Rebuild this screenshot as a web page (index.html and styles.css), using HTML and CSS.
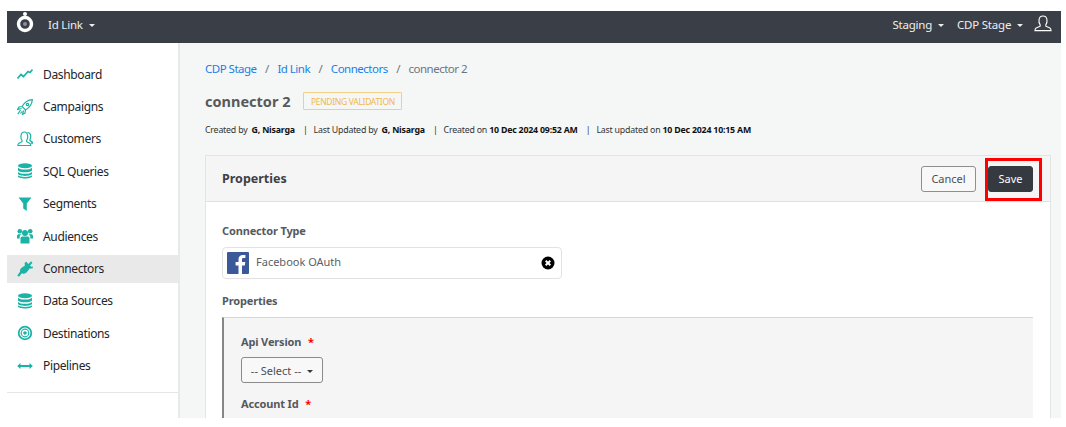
FILE: index.html
```html
<!DOCTYPE html>
<html lang="en">
<head>
    <meta charset="UTF-8">
    <meta name="viewport" content="width=device-width, initial-scale=1.0">
    <title>Id Link - connector 2</title>
    <link rel="stylesheet" href="styles.css">
</head>
<body>
    <div class="app">
        <header class="topbar">
            <svg class="logo" viewBox="0 0 20 22" width="20" height="22">
                <circle cx="10" cy="3" r="2" fill="#fff"/>
                <circle cx="10" cy="13" r="6.500" fill="none" stroke="#fff" stroke-width="3.400"/>
                <circle cx="10" cy="13" r="2" fill="#8a8f96"/>
            </svg>
            <span class="top-link app-name">Id Link <i class="caret"></i></span>
            <div class="top-right">
                <span class="top-link">Staging <i class="caret"></i></span>
                <span class="top-link">CDP Stage <i class="caret"></i></span>
                <svg class="user-icon" viewBox="0 0 18 18" width="18" height="17" fill="none" stroke="#fff" stroke-width="1.200">
                    <path d="M6 10.500C4.600 8.800 4.600 6.500 4.800 5 5.100 2.500 6.800 1 9 1s3.900 1.500 4.200 4c.2 1.500.2 3.800-1.200 5.500v1.300l4.300 2c.8.400 1.200 1 1.200 2.700H.5c0-1.700.4-2.300 1.200-2.700l4.300-2z"/>
                </svg>
            </div>
        </header>
        <div class="main">
            <nav class="sidebar">
                <ul class="nav-list">
                    <li class="nav-item">
                        <svg class="nav-icon" viewBox="0 0 16 16" fill="none" stroke="#1ab3a6" stroke-width="1.700"><path d="M0.500 12.500L4 8.500 6.500 10.500 11 5.500 13 6.500 15.500 3.500"/></svg>
                        Dashboard
                    </li>
                    <li class="nav-item">
                        <svg class="nav-icon" viewBox="0 0 16 16" fill="none" stroke="#1ab3a6" stroke-width="1.200"><path d="M15.300.7C11 1 7.500 3.500 5 7.500L8.500 11C12.500 8.500 15 5 15.300.7zM5 7.500L2 8 .6 10.500 4.500 9.500M8.500 11L8 14 5.500 15.400 6.500 11.500M3.500 11L.8 15.200M5 12.500L3.500 14.500"/><circle cx="10.500" cy="5.500" r="1.200"/></svg>
                        Campaigns
                    </li>
                    <li class="nav-item">
                        <svg class="nav-icon" viewBox="0 0 16 16" fill="none" stroke="#1ab3a6" stroke-width="1.200"><path d="M5 9.500C3.800 8 3.800 6 4 4.700 4.300 2.500 5.500 1 7.300 1s3.100 1.500 3.300 3.700c.2 1.300.1 3.300-1 4.800v1.200l3.100 1.600c.7.400 1 .9 1 2.200H.9c0-1.300.3-1.800 1-2.200L5 10.700zM10.500 1.500c2 0 3 1.500 3.200 3.200.1 1.300 0 2.800-.8 3.900v1l1.800 1c.6.300.8.700.8 1.600h-1.500"/></svg>
                        Customers
                    </li>
                    <li class="nav-item">
                        <svg class="nav-icon" viewBox="0 0 16 16" fill="#1ab3a6"><ellipse cx="8" cy="2.800" rx="7" ry="2.500"/><path d="M1 4.700C2 6 5 6.500 8 6.500s6-.5 7-1.800v2.500C15 8.300 11.500 9.300 8 9.300S1 8.300 1 7.200zM1 8.900c1 1.300 4 1.800 7 1.800s6-.5 7-1.800v1.900c0 1.100-3.500 2.100-7 2.100s-7-1-7-2.100zM1 12.300c1 1.200 4 1.700 7 1.700s6-.5 7-1.700v1.200c0 1.100-3.500 2-7 2s-7-.9-7-2z"/></svg>
                        SQL Queries
                    </li>
                    <li class="nav-item">
                        <svg class="nav-icon" viewBox="0 0 16 16" fill="#1ab3a6"><path d="M1.500 1.500H14.500L9.800 7.500V15L6.200 12.500V7.500z"/></svg>
                        Segments
                    </li>
                    <li class="nav-item">
                        <svg class="nav-icon" viewBox="0 0 16 16" fill="#1ab3a6"><circle cx="8" cy="5" r="3"/><circle cx="2.800" cy="3.300" r="2.300"/><circle cx="13.200" cy="3.300" r="2.300"/><path d="M3.500 15.500V10.500C3.500 9 4.500 8.500 5.500 8.500H10.500C11.500 8.500 12.500 9 12.500 10.500V15.500z"/><path d="M0 10.500V8C0 6.800 .8 6.200 2 6.200H4.500L2.700 8V10.500zM16 10.500V8C16 6.800 15.200 6.200 14 6.200H11.500L13.300 8V10.500z"/></svg>
                        Audiences
                    </li>
                    <li class="nav-item active">
                        <svg class="nav-icon" viewBox="0 0 16 16" fill="#1ab3a6"><path d="M9 .5L11.500 3 14 .3 15.500 1.700 13 4.500 14.300 5.700 16 5.500 15.500 7.500 12.500 7.500 12 8.500 9.500 11.500C8 12.800 6 13 4.800 12.300L2 15.800.3 14.500 3 10.800C2.800 9 3.500 7.500 5 6.500L8 4.500 7.500 2.500z"/></svg>
                        Connectors
                    </li>
                    <li class="nav-item">
                        <svg class="nav-icon" viewBox="0 0 16 16" fill="#1ab3a6"><ellipse cx="8" cy="2.800" rx="7" ry="2.500"/><path d="M1 4.700C2 6 5 6.500 8 6.500s6-.5 7-1.800v2.500C15 8.300 11.500 9.300 8 9.300S1 8.300 1 7.200zM1 8.900c1 1.300 4 1.800 7 1.800s6-.5 7-1.800v1.900c0 1.100-3.500 2.100-7 2.100s-7-1-7-2.100zM1 12.300c1 1.200 4 1.700 7 1.700s6-.5 7-1.700v1.200c0 1.100-3.500 2-7 2s-7-.9-7-2z"/></svg>
                        Data Sources
                    </li>
                    <li class="nav-item">
                        <svg class="nav-icon" viewBox="0 0 16 16" fill="none" stroke="#1ab3a6"><circle cx="8" cy="8" r="6.300" stroke-width="1.800"/><circle cx="8" cy="8" r="3.800" stroke-width="1.200"/><circle cx="8" cy="8" r="1.800" fill="#1ab3a6" stroke="none"/></svg>
                        Destinations
                    </li>
                    <li class="nav-item">
                        <svg class="nav-icon" viewBox="0 0 16 16" fill="#1ab3a6"><path d="M.2 8L3.500 5V7H12.500V5L15.800 8 12.500 11V9H3.500V11z"/></svg>
                        Pipelines
                    </li>
                </ul>
            </nav>
            <main class="content">
                <div class="breadcrumb">
                    <a class="crumb-link">CDP Stage</a><span class="crumb-sep">/</span>
                    <a class="crumb-link">Id Link</a><span class="crumb-sep">/</span>
                    <a class="crumb-link">Connectors</a><span class="crumb-sep">/</span>
                    <span class="crumb-current">connector 2</span>
                </div>
                <div class="title-row">
                    <h1 class="title">connector 2</h1>
                    <span class="badge">PENDING VALIDATION</span>
                </div>
                <p class="meta">
                    Created by <b class="meta-name">G, Nisarga</b><span class="meta-sep">|</span>Last Updated by <b class="meta-name">G, Nisarga</b><span class="meta-sep">|</span>Created on <b>10 Dec 2024 09:52 AM</b><span class="meta-sep">|</span>Last updated on <b>10 Dec 2024 10:15 AM</b>
                </p>
                <section class="card">
                    <div class="card-head">
                        <h2 class="card-title">Properties</h2>
                        <button class="btn btn-cancel">Cancel</button>
                        <button class="btn btn-save">Save</button>
                        <div class="highlight"></div>
                    </div>
                    <div class="card-body">
                        <div class="label">Connector Type</div>
                        <div class="type-field">
                            <svg class="fb-icon" viewBox="0 0 22 22" width="22" height="22">
                                <rect width="22" height="22" rx="1" fill="#3b5998"/>
                                <path d="M15 22V13.500H17.800L18.300 10H15V7.800C15 6.800 15.300 6.100 16.700 6.100H18.400V3C18.100 3 17 2.900 15.800 2.900 13.200 2.900 11.500 4.500 11.500 7.400V10H8.600V13.500H11.500V22z" fill="#fff"/>
                            </svg>
                            <span class="type-name">Facebook OAuth</span>
                            <svg class="clear-icon" viewBox="0 0 14 14" width="14" height="14">
                                <circle cx="7" cy="7" r="6.500" fill="#000"/>
                                <path d="M4.700 4.700L9.300 9.300M9.300 4.700L4.700 9.300" stroke="#fff" stroke-width="2"/>
                            </svg>
                        </div>
                        <div class="label label-props">Properties</div>
                        <div class="props-box">
                            <div class="label">Api Version <span class="required">*</span></div>
                            <button class="select-btn">-- Select -- <i class="caret caret-dark"></i></button>
                            <div class="label label-account">Account Id <span class="required">*</span></div>
                        </div>
                    </div>
                </section>
            </main>
        </div>
    </div>
</body>
</html>
```

FILE: styles.css
```css
* {
    box-sizing: border-box;
}
html, body {
    height: 100%;
    overflow: hidden;
}
body {
    margin: 0;
    padding: 11px 5px 9px 7px;
    background-color: #fff;
    font-family: "Noto Sans", Arial, sans-serif;
    font-size: 12px;
    color: #212529;
}
.app {
    height: 407px;
    display: flex;
    flex-direction: column;
    overflow: hidden;
}
.topbar {
    height: 32px;
    flex: none;
    display: flex;
    align-items: center;
    padding: 0 9px 0 8px;
    background-color: #3a3f47;
}
.logo {
    margin-top: -10px;
}
.top-link {
    margin-bottom: 6px;
    color: #eceef0;
    font-size: 11.500px;
    letter-spacing: -.2px;
    white-space: nowrap;
}
.app-name {
    margin-left: 13px;
}
.top-right {
    margin-left: auto;
    display: flex;
    align-items: center;
    gap: 13px;
}
.user-icon {
    margin-left: -2px;
    margin-top: -8px;
}
.caret {
    display: inline-block;
    width: 0;
    height: 0;
    margin-left: 3px;
    vertical-align: 2px;
    border-top: 3px solid #eceef0;
    border-left: 3px solid transparent;
    border-right: 3px solid transparent;
}
.caret-dark {
    border-top-color: #343a40;
}
.main {
    flex: 1;
    min-height: 0;
    display: flex;
}
.sidebar {
    width: 173px;
    flex: none;
    height: 100%;
    background: #fff;
    border-right: 2px solid #e8e9ea;
}
.nav-list {
    list-style: none;
    margin: 0;
    padding: 17.200px 0 12px;
    border-bottom: 1px solid #e6e6e6;
}
.nav-item {
    height: 28px;
    margin-bottom: 4.400px;
    display: flex;
    align-items: center;
    gap: 10px;
    padding-left: 10px;
    font-size: 12px;
    letter-spacing: -.35px;
    color: #22262a;
}
.nav-item:last-child {
    margin-bottom: 0;
}
.nav-item.active {
    background-color: #e9e9e9;
}
.nav-icon {
    width: 16px;
    height: 16px;
    flex: none;
}
.content {
    flex: 1;
    min-width: 0;
    padding: 16px 10px 0 25px;
    background-color: #f5f6f6;
}
.breadcrumb {
    display: flex;
    align-items: center;
    height: 18px;
    font-size: 11.500px;
    letter-spacing: -.5px;
}
.crumb-link {
    color: #1a7fe8;
}
.crumb-sep {
    margin: 0 8.500px;
    color: #6c757d;
}
.crumb-current {
    color: #6c757d;
}
.title-row {
    display: flex;
    align-items: center;
    gap: 13px;
    margin-top: 14px;
    height: 20px;
}
.title {
    margin: 0;
    font-size: 14.500px;
    font-weight: 700;
    color: #58595b;
}
.badge {
    height: 18px;
    padding: 0 6.500px;
    display: flex;
    align-items: center;
    font-size: 8.500px;
    letter-spacing: -.3px;
    color: #f0b849;
    border: 1px solid #f3cf85;
    border-radius: 1px;
}
.meta {
    margin: 12px 0 0;
    height: 14px;
    line-height: 14px;
    font-size: 8.800px;
    letter-spacing: -.2px;
    color: #333;
    white-space: nowrap;
}
.meta b {
    color: #111;
}
.meta-name {
    margin-left: 2px;
}
.meta-sep {
    margin: 0 6px 0 8px;
}
.card {
    margin-top: 18px;
    background: #fff;
    border: 1px solid #e3e5e5;
    border-bottom: none;
}
.card-head {
    position: relative;
    height: 46px;
    display: flex;
    align-items: center;
    padding: 0 17px 0 16px;
    background-color: #f5f5f5;
    border-bottom: 1px solid #e0e0e0;
}
.card-title {
    margin: 0 auto 0 0;
    font-size: 12.500px;
    font-weight: 700;
    color: #3d4045;
}
.btn {
    height: 26px;
    padding: 0;
    font-family: inherit;
    font-size: 11px;
    border-radius: 3px;
}
.btn-cancel {
    width: 55px;
    margin-right: 12px;
    background: #f8f8f8;
    color: #4a4f55;
    border: 1px solid #8f8f8f;
}
.btn-save {
    width: 45px;
    background: #343a40;
    color: #fff;
    border: 1px solid #343a40;
}
.highlight {
    position: absolute;
    left: 779px;
    top: 2px;
    width: 57px;
    height: 43px;
    border: 3px solid #f00;
}
.card-body {
    padding: 21px 17px 0 16px;
}
.label {
    font-size: 11px;
    font-weight: 700;
    line-height: 16px;
    letter-spacing: -.15px;
    color: #55595e;
}
.type-field {
    margin-top: 8px;
    width: 340px;
    height: 32px;
    display: flex;
    align-items: center;
    padding: 0 6px 0 4px;
    background: #fff;
    border: 1px solid #e2e2e2;
    border-radius: 4px;
}
.type-name {
    margin-left: 7px;
    margin-bottom: 3px;
    font-size: 11px;
    color: #5b5f64;
}
.clear-icon {
    margin-left: auto;
}
.label-props {
    margin-top: 14px;
}
.props-box {
    margin-top: 8px;
    height: 120px;
    padding: 16px 0 0 17px;
    background-color: #f5f5f5;
    border-top: 1px solid #d5d8d8;
    border-left: 2px solid #868686;
}
.required {
    margin-left: 4px;
    color: #f00;
}
.select-btn {
    display: block;
    margin-top: 7px;
    width: 82px;
    height: 26px;
    padding: 0;
    font-family: inherit;
    font-size: 11px;
    color: #4a4f55;
    background: #f8f8f8;
    border: 1px solid #8a8a8a;
    border-radius: 3px;
}
.label-account {
    margin-top: 13px;
}
```
